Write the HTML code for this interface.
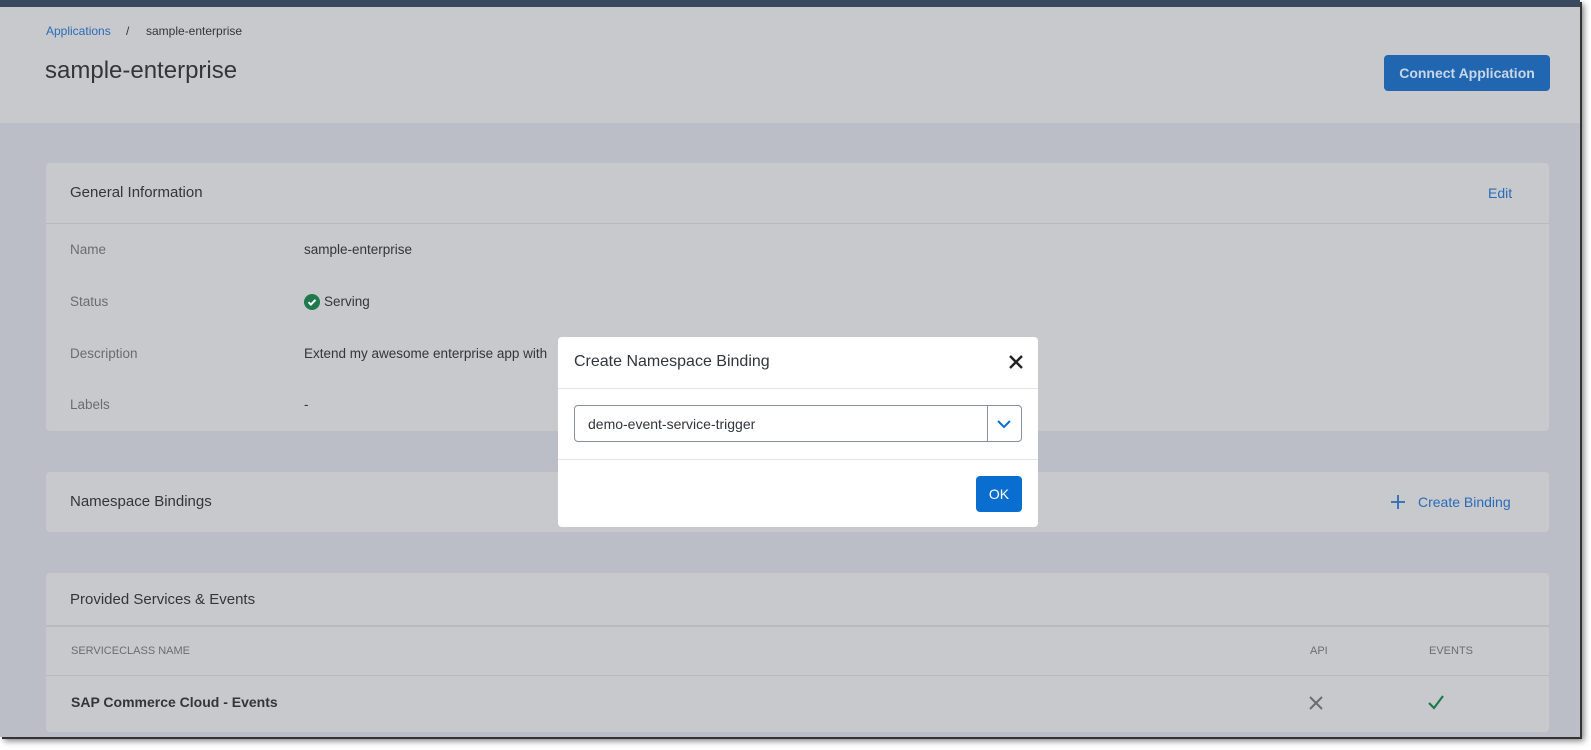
<!DOCTYPE html>
<html><head><meta charset="utf-8"><style>
*{box-sizing:border-box;margin:0;padding:0}
body{width:1591px;height:750px;background:#fff;position:relative;overflow:hidden;font-family:"Liberation Sans",sans-serif;color:#32363a}
#win{position:absolute;left:0;top:0;width:1580px;height:737px;background:#bbbec6;overflow:hidden;box-shadow:2px 2px 0 #333,4px 4px 6px rgba(0,0,0,.5)}
#bar{position:absolute;left:0;top:0;width:100%;height:7px;background:#3a4a5e}
#hdr{position:absolute;left:0;top:7px;width:100%;height:116px;background:#c8c9cd}
.abs{position:absolute;white-space:nowrap}
.card{position:absolute;left:46px;width:1503px;background:#c8c9cd;border-radius:4px}
.lbl{color:#6a6d70;font-size:13.5px}
.val{font-size:13.5px;color:#32363a}
.link{color:#2a6bb8}
.hl{position:absolute;left:0;width:100%;height:1px;background:#b8babe}
#modal{position:absolute;left:558px;top:337px;width:480px;height:190px;background:#fff;border-radius:4px}
</style></head><body>
<div id="win">
<div id="bar"></div>
<div id="hdr">
 <div class="abs link" style="left:46px;top:17px;font-size:12px">Applications</div>
 <div class="abs" style="left:126px;top:17px;font-size:12px;color:#32363a">/</div>
 <div class="abs" style="left:146px;top:17px;font-size:12px;color:#32363a">sample-enterprise</div>
 <div class="abs" style="left:45px;top:50px;font-size:24px;color:#32363a">sample-enterprise</div>
 <div class="abs" style="left:1384px;top:48px;width:166px;height:36px;background:#2166b1;border-radius:4px;color:#c9d6e6;font-weight:bold;font-size:14px;text-align:center;line-height:36px">Connect Application</div>
</div>
<div class="card" style="top:163px;height:268px">
 <div class="abs" style="left:24px;top:21px;font-size:15px">General Information</div>
 <div class="abs link" style="left:1442px;top:22px;font-size:14px">Edit</div>
 <div class="hl" style="top:60px"></div>
 <div class="abs lbl" style="left:24px;top:79px">Name</div>
 <div class="abs val" style="left:258px;top:79px">sample-enterprise</div>
 <div class="abs lbl" style="left:24px;top:131px">Status</div>
 <div class="abs" style="left:258px;top:131px;width:16px;height:16px;border-radius:50%;background:#1e7a4c"><svg width="16" height="16" viewBox="0 0 16 16"><path d="M4.5 8.2l2.4 2.4 4.6-4.8" stroke="#fff" stroke-width="2" fill="none"/></svg></div>
 <div class="abs val" style="left:278px;top:131px">Serving</div>
 <div class="abs lbl" style="left:24px;top:183px">Description</div>
 <div class="abs val" style="left:258px;top:183px">Extend my awesome enterprise app with</div>
 <div class="abs lbl" style="left:24px;top:234px">Labels</div>
 <div class="abs val" style="left:258px;top:234px">-</div>
</div>
<div class="card" style="top:472px;height:60px">
 <div class="abs" style="left:24px;top:21px;font-size:15px">Namespace Bindings</div>
 <svg class="abs" style="left:1344px;top:22px" width="16" height="16"><path d="M8 1v14M1 8h14" stroke="#2a6bb8" stroke-width="1.8"/></svg>
 <div class="abs link" style="left:1372px;top:22px;font-size:14px">Create Binding</div>
</div>
<div class="card" style="top:573px;height:159px">
 <div class="abs" style="left:24px;top:18px;font-size:15px">Provided Services &amp; Events</div>
 <div class="hl" style="top:52px;height:2px"></div>
 <div class="abs lbl" style="left:25px;top:72px;font-size:11px">SERVICECLASS NAME</div>
 <div class="abs lbl" style="left:1264px;top:72px;font-size:11px">API</div>
 <div class="abs lbl" style="left:1383px;top:72px;font-size:11px">EVENTS</div>
 <div class="hl" style="top:102px"></div>
 <div class="abs" style="left:25px;top:121px;font-size:14px;font-weight:bold">SAP Commerce Cloud - Events</div>
 <svg class="abs" style="left:1262px;top:122px" width="16" height="16"><path d="M2 2l12 12M14 2L2 14" stroke="#6a6d70" stroke-width="2"/></svg>
 <svg class="abs" style="left:1381px;top:120px" width="18" height="18"><path d="M2 10l5 5L16 3" stroke="#1e7a4c" stroke-width="2.2" fill="none"/></svg>
</div>
<div id="modal">
 <div class="abs" style="left:16px;top:16px;font-size:16px;color:#32363a">Create Namespace Binding</div>
 <svg class="abs" style="left:450px;top:17px" width="16" height="16"><path d="M2 2l12 12M14 2L2 14" stroke="#222" stroke-width="2.4"/></svg>
 <div class="hl" style="top:51px;background:#e5e5e5"></div>
 <div class="abs" style="left:16px;top:68px;width:448px;height:37px;border:1px solid #89919a;border-radius:4px">
  <div class="abs" style="left:13px;top:10px;font-size:14px">demo-event-service-trigger</div>
  <div class="abs" style="left:412px;top:0;width:1px;height:35px;background:#89919a"></div>
  <svg class="abs" style="left:421px;top:11px" width="16" height="14"><path d="M2 4l6 6 6-6" stroke="#0a6ed1" stroke-width="2" fill="none"/></svg>
 </div>
 <div class="hl" style="top:122px;background:#e5e5e5"></div>
 <div class="abs" style="left:418px;top:139px;width:46px;height:36px;background:#0a6ed1;border-radius:4px;color:#fff;font-size:14px;text-align:center;line-height:36px">OK</div>
</div>
</div>
</body></html>
